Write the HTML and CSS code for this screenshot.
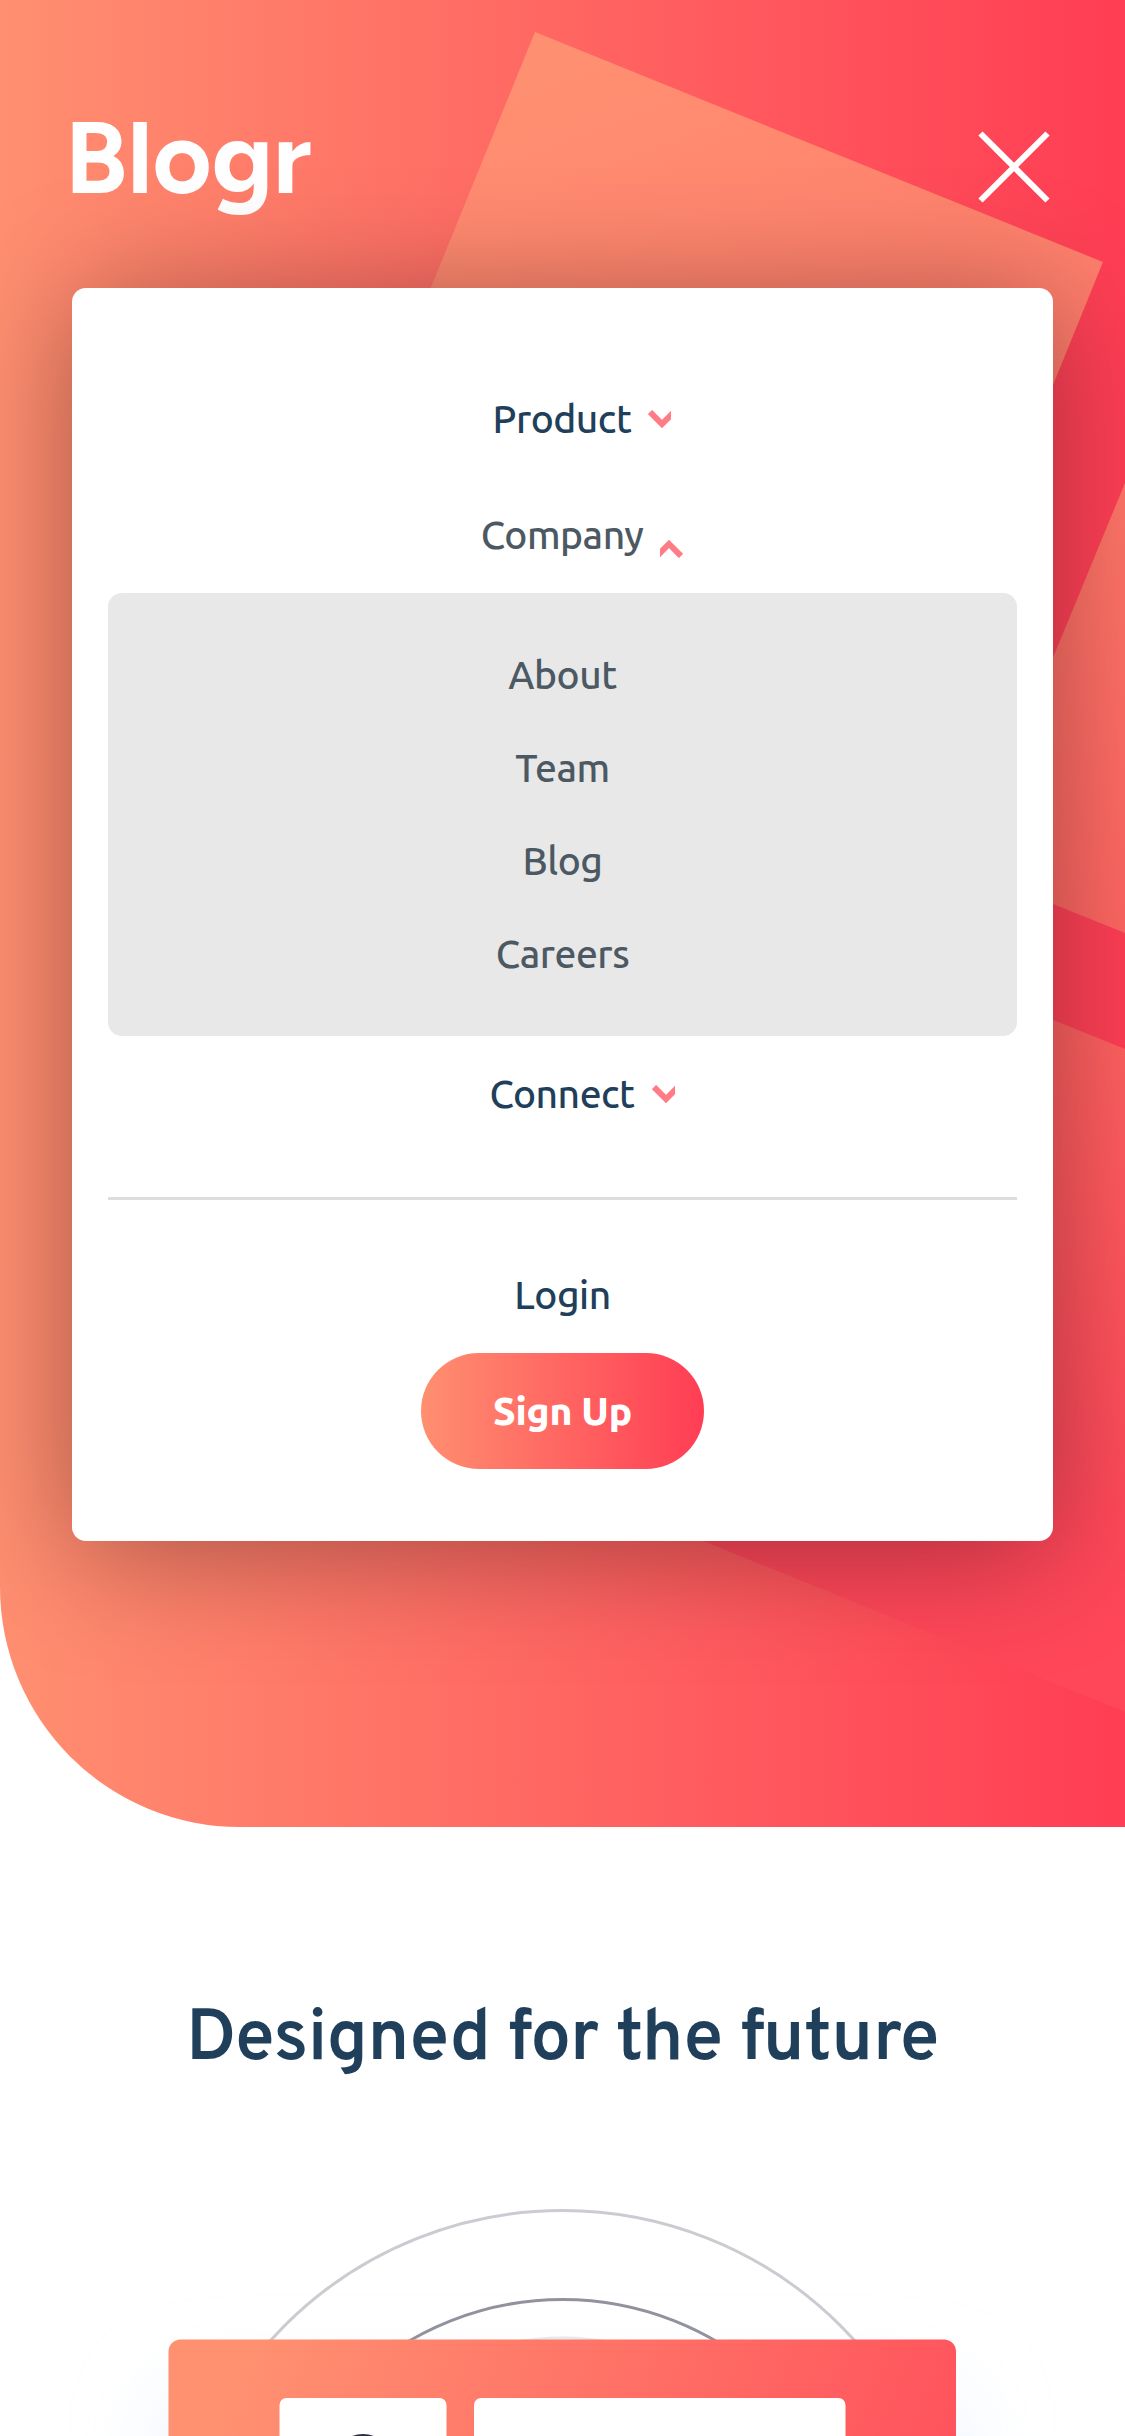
FILE: index.html
```html
<!DOCTYPE html>
<html lang="en">
<head>
<meta charset="utf-8">
<title>Blogr</title>
<link rel="stylesheet" href="styles.css">
</head>
<body>
<header class="hero">
  <svg class="hero-pattern" viewBox="0 0 1125 1827" aria-hidden="true">
    <defs>
      <linearGradient id="tile-a" gradientUnits="userSpaceOnUse" x1="600" y1="60" x2="880" y2="800">
        <stop offset="0" stop-color="#ff8f71"/><stop offset="1" stop-color="#ff6b66"/>
      </linearGradient>
      <linearGradient id="tile-b" gradientUnits="userSpaceOnUse" x1="1125" y1="480" x2="1125" y2="930">
        <stop offset="0" stop-color="#ff7568"/><stop offset="1" stop-color="#ff6662"/>
      </linearGradient>
      <linearGradient id="tile-c" gradientUnits="userSpaceOnUse" x1="1080" y1="1030" x2="910" y2="1460">
        <stop offset="0" stop-color="#ff6060"/><stop offset="1" stop-color="#ff4759"/>
      </linearGradient>
    </defs>
    <path fill="url(#tile-a)" d="M535 32 1103 262 872 830 304 599Z"/>
    <path fill="url(#tile-b)" d="M1125 483V933L984 876 980 835Z"/>
    <path fill="url(#tile-c)" d="M700 877 1125 1049V1712L560 1483Z"/>
  </svg>
  <div class="topbar">
    <a class="logo">Blogr</a>
    <svg class="close" viewBox="0 0 72 72"><path d="M2.5 2.5 69.5 69.5M69.5 2.5 2.5 69.5"/></svg>
  </div>
  <nav class="menu">
    <a class="item product"><span>Product</span><svg class="chevron" viewBox="0 0 23 18"><path d="M2 2 14 14 26 2"/></svg></a>
    <a class="item company open"><span>Company</span><svg class="chevron" viewBox="0 0 23 18"><path d="M2 2 14 14 26 2"/></svg></a>
    <div class="submenu">
      <a class="about">About</a>
      <a class="team">Team</a>
      <a class="blog">Blog</a>
      <a class="careers">Careers</a>
    </div>
    <a class="item connect"><span>Connect</span><svg class="chevron" viewBox="0 0 23 18"><path d="M2 2 14 14 26 2"/></svg></a>
    <hr class="divider">
    <a class="login">Login</a>
    <a class="signup">Sign Up</a>
  </nav>
</header>
<main class="future">
  <h2>Designed for the future</h2>
  <svg class="illustration" viewBox="0 0 1125 286">
    <defs>
      <linearGradient id="panel" gradientUnits="userSpaceOnUse" x1="260" y1="190" x2="960" y2="480">
        <stop offset="0" stop-color="#ff9070"/><stop offset="1" stop-color="#ff4c5a"/>
      </linearGradient>
      <filter id="glow" x="-40%" y="-40%" width="180%" height="180%"><feGaussianBlur stdDeviation="48"/></filter>
    </defs>
    <rect class="panel-glow" x="169" y="250" width="787" height="600" filter="url(#glow)"/>
    <circle class="ring outer" cx="562.5" cy="453.5" r="393"/>
    <circle class="ring middle" cx="562.5" cy="453.5" r="304"/>
    <circle class="ring inner" cx="562.5" cy="454" r="266"/>
    <rect x="168.5" y="189.5" width="787.5" height="620" rx="12" fill="url(#panel)"/>
    <rect x="279.5" y="248" width="167" height="300" rx="7" fill="#fff"/>
    <rect x="474" y="248" width="371.5" height="300" rx="7" fill="#fff"/>
    <circle cx="363" cy="314" r="30" fill="#2c2c3f"/>
  </svg>
</main>
</body>
</html>
```
FILE: styles.css
```css
* { box-sizing: border-box; }
body {
  margin: 0;
  height: 2436px;
  overflow: hidden;
  background: #fff;
  color: #1f3f5b;
  font-family: "Ubuntu", "Noto Sans", sans-serif;
}
.hero {
  position: relative;
  height: 1827px;
  padding: 120px 72px 0;
  overflow: hidden;
  border-bottom-left-radius: 240px;
  background: linear-gradient(90deg, #ff8f70, #ff3d54);
}
.hero-pattern { position: absolute; inset: 0; width: 1125px; height: 1827px; }
.topbar { display: flex; justify-content: space-between; height: 168px; }
.logo {
  color: #fff;
  font: 720 102px/1 "Gilroy", "Figtree", "Outfit", "Poppins", "Montserrat", "Lato", sans-serif;
  margin: -13px 0 0 -7px;
}
.close { width: 72px; height: 72px; margin: 11px 3px 0 0; fill: none; stroke: #fff; stroke-width: 6; }
.menu {
  position: relative;
  display: flex;
  flex-direction: column;
  align-items: center;
  height: 1253px;
  padding: 73px 36px 0;
  border-radius: 14px;
  background: #fff;
  box-shadow: 0 12px 120px rgba(0, 0, 0, .35);
  font-size: 39px;
  line-height: 116px;
  font-weight: 500;
  letter-spacing: -.5px;
}
.item { display: flex; align-items: center; height: 116px; gap: 17px; padding-left: 39px; }
.item.open { color: #4c5963; }
.chevron { width: 23px; height: 18px; fill: none; stroke: #ff7b86; stroke-width: 6; }
.open .chevron { transform: rotate(180deg); margin-top: 28px; }
.submenu {
  display: flex;
  flex-direction: column;
  align-items: center;
  align-self: stretch;
  height: 443px;
  padding-top: 35px;
  border-radius: 14px;
  background: #e8e8e8;
  color: #4c5963;
  line-height: 93px;
}
.divider { align-self: stretch; height: 3px; margin: 45px 0 37px; border: 0; background: #ddd; }
.login { height: 116px; }
.signup {
  width: 283px;
  height: 116px;
  border-radius: 58px;
  background: linear-gradient(90deg, #ff8f70, #ff3d54);
  color: #fff;
  font-weight: 800;
  letter-spacing: -.2px;
  text-align: center;
}
.future h2 {
  height: 323px;
  margin: 0;
  padding-top: 174px;
  font: 600 72px/80px "Overpass", "Noto Sans", sans-serif;
  letter-spacing: -.6px;
  text-align: center;
}
.illustration { display: block; width: 1125px; height: 286px; }
.panel-glow { fill: #dce8ff; opacity: .6; }
.ring { fill: none; stroke-width: 3; }
.outer { stroke: #cbcbd1; }
.middle { stroke: #92929f; }
.inner { stroke: #e5e7eb; }
```
